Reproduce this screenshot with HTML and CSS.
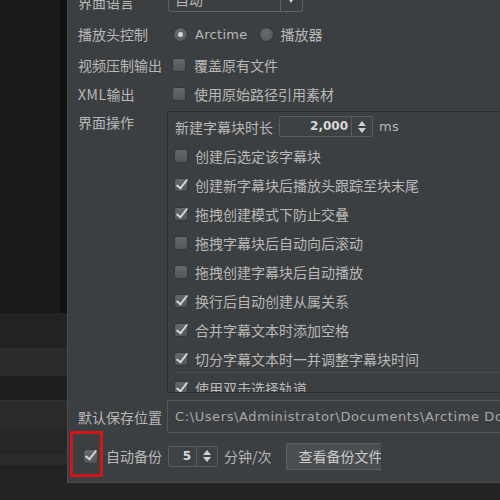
FILE: index.html
```html
<!DOCTYPE html>
<html lang="zh-CN">
<head>
  <meta charset="UTF-8">
  <title>偏好设置</title>
  <link rel="stylesheet" href="styles.css">
</head>
<body>

<div class="screen">
  <!-- timeline tracks behind the dialog -->
  <div class="timeline">
    <div class="band band-top"></div>
    <div class="band band-a"></div>
    <div class="band band-b"></div>
    <div class="band band-c"></div>
    <div class="band band-b"></div>
    <div class="band band-d"></div>
    <div class="band band-e"></div>
    <div class="band band-a"></div>
  </div>

  <div class="prefs">
    <div class="form">

      <div class="row row-lang">
        <div class="label">界面语言</div>
        <div class="combo">
          <span class="combo-text">自动</span>
          <span class="combo-arrow"></span>
        </div>
      </div>

      <div class="row row-play">
        <div class="label">播放头控制</div>
        <span class="radio on"></span>
        <span class="opt latin">Arctime</span>
        <span class="radio"></span>
        <span class="opt">播放器</span>
      </div>

      <div class="row row-video">
        <div class="label">视频压制输出</div>
        <span class="cb"></span>
        <span class="opt">覆盖原有文件</span>
      </div>

      <div class="row row-xml">
        <div class="label"><span class="latin-thin">XML</span>输出</div>
        <span class="cb"></span>
        <span class="opt">使用原始路径引用素材</span>
      </div>

      <div class="row row-ui">
        <div class="label label-top">界面操作</div>
        <div class="panel">
          <div class="prow prow-spin">
            <span>新建字幕块时长</span>
            <div class="spinner spinner-wide">
              <span class="spin-value">2,000</span>
              <span class="spin-btns"><i class="up"></i><i class="down"></i></span>
            </div>
            <span class="unit latin">ms</span>
          </div>
          <div class="prow"><span class="cb"></span><span class="opt">创建后选定该字幕块</span></div>
          <div class="prow"><span class="cb on"></span><span class="opt">创建新字幕块后播放头跟踪至块末尾</span></div>
          <div class="prow"><span class="cb on"></span><span class="opt">拖拽创建模式下防止交叠</span></div>
          <div class="prow"><span class="cb"></span><span class="opt">拖拽字幕块后自动向后滚动</span></div>
          <div class="prow"><span class="cb"></span><span class="opt">拖拽创建字幕块后自动播放</span></div>
          <div class="prow"><span class="cb on"></span><span class="opt">换行后自动创建从属关系</span></div>
          <div class="prow"><span class="cb on"></span><span class="opt">合并字幕文本时添加空格</span></div>
          <div class="prow"><span class="cb on"></span><span class="opt">切分字幕文本时一并调整字幕块时间</span></div>
          <div class="prow prow-split"><span class="cb on"></span><span class="opt">使用双击选择轨道</span></div>
        </div>
      </div>

      <div class="row row-save">
        <div class="label">默认保存位置</div>
        <div class="path-field">C:\Users\Administrator\Documents\Arctime Documents</div>
      </div>

      <div class="row row-backup">
        <div class="label label-check">
          <span class="cb on"></span>
          <span class="opt">自动备份</span>
        </div>
        <div class="spinner spinner-small">
          <span class="spin-value">5</span>
          <span class="spin-btns"><i class="up"></i><i class="down"></i></span>
        </div>
        <span class="unit">分钟/次</span>
        <div class="btn">查看备份文件</div>
        <span class="mark"></span>
      </div>

    </div>
  </div>
</div>

</body>
</html>
```

FILE: styles.css
```css
body {
  margin: 0;
  background: #232323;
  font-family: "Noto Sans CJK SC", "Noto Sans", sans-serif;
  font-size: 14px;
  color: #b8b8b8;
}
.screen {
  display: flex;
  height: 500px;
  overflow: hidden;
}

/* timeline */
.timeline {
  width: 67px;
  flex: none;
  display: flex;
  flex-direction: column;
}
.band {
  box-sizing: border-box;
}
.band-top {
  height: 328px;
  background: #1b1b1b;
  border-right: 7px solid #101010;
}
.band-a { height: 37px; background: #222222; }
.band-b { height: 29px; background: #2b2b2b; }
.band-c { height: 26px; background: #1f1f1f; border-bottom: 1px solid #333; }
.band-d { height: 27px; background: #262626; }
.band-e { height: 11px; background: #2b2b2b; }

/* dialog */
.prefs {
  flex: 1;
  overflow: hidden;
}
.form {
  box-sizing: border-box;
  height: 497px;
  margin-top: -14px;
  padding: 0 0 4px 10px;
  background: #3c3f41;
  border-left: 1px solid #4b4e50;
  border-bottom: 1px solid #45484a;
}
.row {
  display: flex;
  align-items: center;
  white-space: nowrap;
}
.label {
  width: 89px;
  flex: none;
}
.row-lang { height: 33px; align-items: flex-start; }
.row-lang .label { line-height: 33px; }
.row-play { height: 30px; }
.row-video { height: 31px; }
.row-xml { height: 28px; margin-bottom: 3px; }
.row-ui { align-items: flex-start; }
.label-top { line-height: 22px; }
.row-save { height: 33px; margin-top: 7px; }
.row-backup { height: 46px; position: relative; }

.latin { font-family: "DejaVu Sans", sans-serif; font-size: 13px; letter-spacing: 0.3px; }
.latin-thin { letter-spacing: 0.5px; }

/* combo box */
.combo {
  box-sizing: border-box;
  width: 135px;
  height: 26px;
  margin-left: 1px;
  display: flex;
  border: 1px solid #5e6163;
  border-top: none;
  border-radius: 0 0 3px 3px;
}
.combo-text {
  flex: 1;
  padding: 3px 0 0 6px;
}
.combo-arrow {
  width: 21px;
  border-left: 1px solid #5e6163;
  position: relative;
}
.combo-arrow::after {
  content: "";
  position: absolute;
  left: 7px;
  top: 12px;
  border: 3px solid transparent;
  border-top: 5px solid #d8d8d8;
}

/* radio buttons */
.radio {
  width: 13px;
  height: 13px;
  border-radius: 50%;
  background: radial-gradient(circle at 45% 40%, #6a6d6f, #505355);
  box-shadow: 0 0 0 1px #35383a;
  display: flex;
  align-items: center;
  justify-content: center;
  flex: none;
}
.row-play .radio:first-of-type { margin-left: 7px; }
.radio.on::after {
  content: "";
  width: 5px;
  height: 5px;
  border-radius: 50%;
  background: #d6d6d6;
}
.radio + .opt { margin-left: 8px; }
.opt.latin + .radio { margin-left: 12px; }

/* check boxes */
.cb {
  position: relative;
  width: 12px;
  height: 12px;
  flex: none;
  border-radius: 2px;
  background: linear-gradient(#66696b, #535658);
  box-shadow: 0 0 0 1px #35383a;
}
.row > .cb { margin-left: 6px; }
.cb.on::after {
  content: "";
  position: absolute;
  left: 4px;
  top: -2px;
  width: 4px;
  height: 10px;
  border: solid #d4d4d4;
  border-width: 0 2px 2px 0;
  transform: rotate(38deg);
}
.cb + .opt { margin-left: 9px; }

/* operations panel */
.panel {
  box-sizing: border-box;
  flex: 1;
  height: 282px;
  overflow: hidden;
  border: 1px solid #2b2d2f;
  border-right: none;
  padding-left: 7px;
}
.prow {
  height: 29px;
  display: flex;
  align-items: center;
}
.prow-spin { height: 29px; }
.prow .cb { margin-left: 0; }
.prow .cb + .opt { margin-left: 8px; }
.prow-split { border-top: 1px solid #474a4c; margin-top: -1px; }

/* spinners */
.spinner {
  box-sizing: border-box;
  height: 21px;
  display: flex;
  border: 1px solid #5a5d5f;
  border-radius: 2px;
  background: #3e4143;
}
.spinner-wide { width: 94px; margin-left: 6px; }
.spinner-small { width: 50px; margin-left: 1px; }
.spin-value {
  flex: 1;
  text-align: right;
  font-family: "DejaVu Sans", sans-serif;
  font-size: 12px;
  font-weight: bold;
  line-height: 19px;
  color: #d8d8d8;
  padding-right: 3px;
}
.spinner-small .spin-value { padding-right: 5px; }
.spin-btns {
  width: 20px;
  border-left: 1px solid #5a5d5f;
  display: flex;
  flex-direction: column;
  align-items: center;
  justify-content: center;
  gap: 2px;
}
.spin-btns i {
  border: 4px solid transparent;
  width: 0;
  height: 0;
}
.spin-btns .up { border-bottom: 5px solid #d0d0d0; border-top: none; }
.spin-btns .down { border-top: 5px solid #d0d0d0; border-bottom: none; }
.unit { margin-left: 6px; }

/* save path */
.path-field {
  box-sizing: border-box;
  flex: 1;
  height: 33px;
  line-height: 31px;
  padding-left: 7px;
  border: 1px solid #55585a;
  border-right: none;
  font-family: "DejaVu Sans", sans-serif;
  font-size: 13px;
  letter-spacing: 0.6px;
  color: #a8a8a8;
  overflow: hidden;
}

/* auto backup row */
.label-check {
  display: flex;
  align-items: center;
  padding-left: 6px;
  box-sizing: border-box;
}
.label-check .cb { width: 13px; height: 13px; }
.label-check .cb + .opt { margin-left: 9px; }
.btn {
  box-sizing: border-box;
  width: 95px;
  height: 27px;
  margin-left: 14px;
  padding-left: 12px;
  line-height: 25px;
  overflow: hidden;
  background: #4a4e50;
  border: 1px solid #5c5f61;
  border-right: none;
  border-radius: 2px 0 0 2px;
  color: #cacaca;
}
.mark {
  position: absolute;
  left: -8px;
  top: -2px;
  width: 33px;
  height: 46px;
  box-sizing: border-box;
  border: 3px solid #d2151a;
}
```
